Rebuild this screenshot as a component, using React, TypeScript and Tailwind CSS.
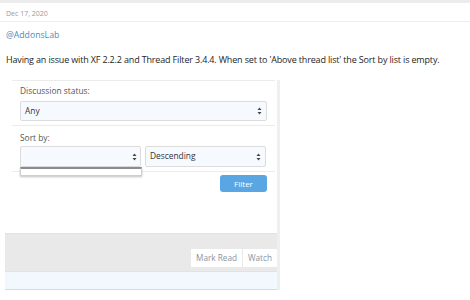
export default function App() {
  const arrows = (
    <svg width="5" height="8" viewBox="0 0 5 8" className="shrink-0">
      <path d="M2.5 0.5 L4.5 3 L0.5 3 Z" fill="#444" />
      <path d="M2.5 7.5 L4.5 5 L0.5 5 Z" fill="#444" />
    </svg>
  );

  return (
    <div className="w-[470px] h-[300px] bg-white overflow-hidden relative" style={{ fontFamily: '"Open Sans", sans-serif' }}>
      <div className="h-[3px] bg-[#ececec]" />
      {/* post header */}
      <div className="h-[19px] pl-[6px] pt-[6px] border-b border-[#eeeeee] text-[7px] leading-[10px] text-[#9a9a9a]">
        Dec 17, 2020
      </div>
      <div className="pl-[6px] pt-[6px] text-[8.7px] leading-[14px] text-[#4b8cbf]">@AddonsLab</div>
      <div className="pl-[6px] pt-[11px] text-[9px] leading-[14px] text-[#1e1e1e] tracking-[-0.16px] whitespace-nowrap">
        Having an issue with XF 2.2.2 and Thread Filter 3.4.4. When set to 'Above thread list' the Sort by list is empty.
      </div>

      {/* embedded screenshot */}
      <div className="mt-[13px] ml-[5px] w-[275px] border-r-[3px] border-[#efefef]">
        <div className="ml-[7px] w-[263px] h-[153px] border-t border-[#ececec] bg-white text-[8.4px] text-[#555]">
          <div className="px-[8px] pt-[4px] pb-[4px] border-b border-[#ececec]">
            <div className="leading-[12px] mb-[4px]">Discussion status:</div>
            <div className="h-[20px] rounded-[2px] border border-[#dcdcdc] bg-[#f6faff] flex items-center justify-between px-[4px] text-[#333]">
              <span>Any</span>
              {arrows}
            </div>
          </div>
          <div className="px-[8px] pt-[6px] border-b border-[#ececec] h-[46px]">
            <div className="leading-[12px] mb-[2px]">Sort by:</div>
            <div className="flex gap-[4px]">
              <div className="relative w-[121px]">
                <div className="h-[21px] rounded-[2px] border border-[#dcdcdc] bg-[#f6faff] flex items-center justify-end px-[3px]">
                  {arrows}
                </div>
                <div className="absolute left-0 top-[21px] w-[122px] h-[9px] border-t-2 border-[#8c8c8c] border-x border-b border-x-[#cfcfcf] border-b-[#cfcfcf] bg-white shadow-[0_1px_2px_rgba(0,0,0,0.25)]" />
              </div>
              <div className="w-[121px] h-[21px] rounded-[2px] border border-[#dcdcdc] bg-[#f6faff] flex items-center justify-between px-[4px] text-[#333]">
                <span>Descending</span>
                {arrows}
              </div>
            </div>
          </div>
          <div className="flex justify-end pr-[8px] pt-[3px]">
            <div className="w-[47px] h-[17px] rounded-[3px] bg-[#5aa6e2] text-white text-[8px] flex items-center justify-center">Filter</div>
          </div>
        </div>
        <div className="h-[38px] bg-[#e9e9e9] border-t border-[#e2e2e2] flex items-end justify-end pb-[4px] text-[8.2px] text-[#8795a3]">
          <div className="h-[18px] px-[5px] bg-white flex items-center border-r border-[#e9e9e9]">Mark Read</div>
          <div className="h-[18px] px-[5px] bg-white flex items-center">Watch</div>
        </div>
        <div className="h-[19px] bg-[#f3f8fe] border-t border-[#dfe4ea] border-b border-b-[#d6dbe0]" />
      </div>
    </div>
  );
}
